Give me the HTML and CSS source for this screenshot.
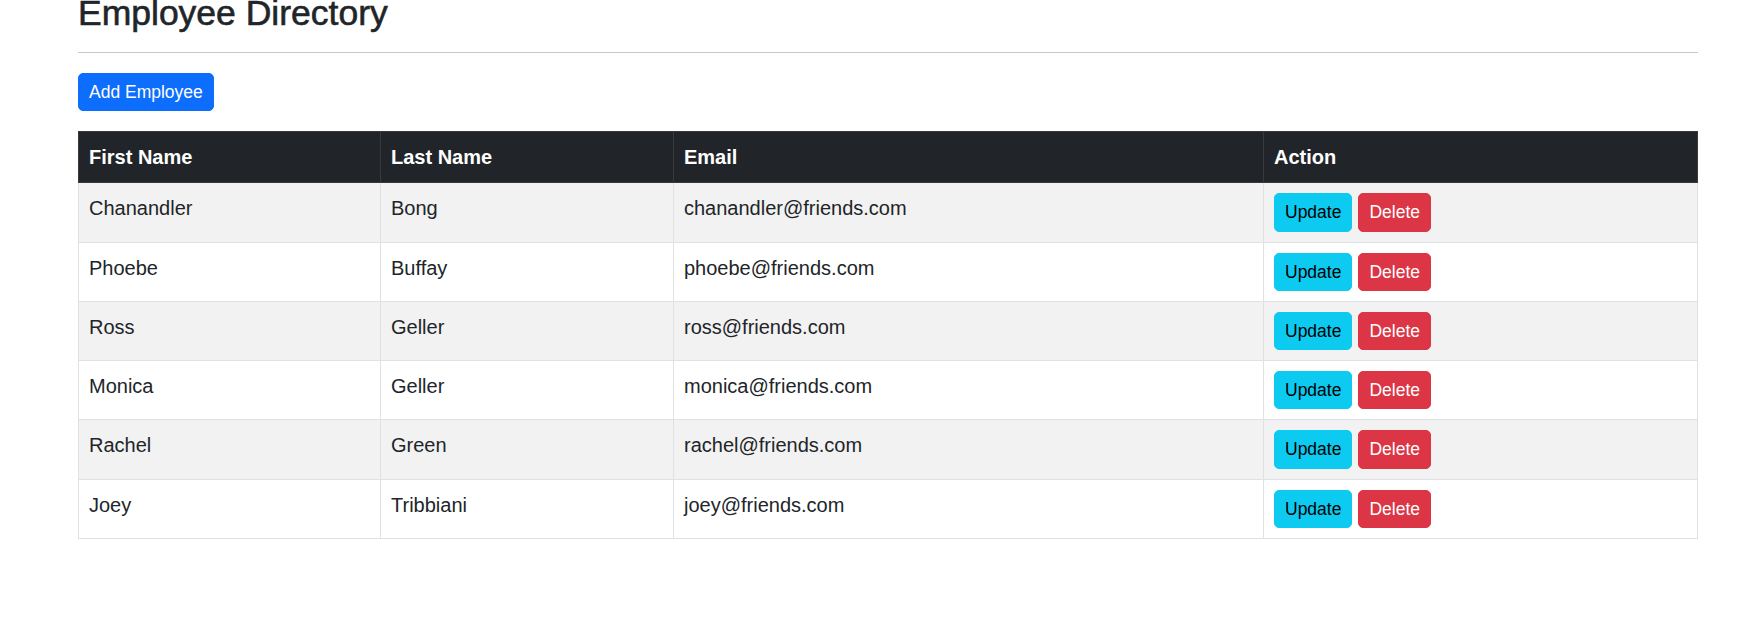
FILE: index.html
```html
<!DOCTYPE html>
<html lang="en">
<head>
<meta charset="utf-8">
<title>Employee Directory</title>
<link rel="stylesheet" href="styles.css">
</head>
<body>
<div class="page">
  <h1 class="title">Employee Directory</h1>
  <hr class="rule">
  <button class="btn btn-primary add-btn">Add Employee</button>
  <table class="table">
    <thead>
      <tr>
        <th class="col-first">First Name</th>
        <th class="col-last">Last Name</th>
        <th class="col-email">Email</th>
        <th class="col-action">Action</th>
      </tr>
    </thead>
    <tbody>
      <tr>
        <td>Chanandler</td><td>Bong</td><td>chanandler@friends.com</td>
        <td><div class="actions"><button class="btn btn-info">Update</button><button class="btn btn-danger">Delete</button></div></td>
      </tr>
      <tr>
        <td>Phoebe</td><td>Buffay</td><td>phoebe@friends.com</td>
        <td><div class="actions"><button class="btn btn-info">Update</button><button class="btn btn-danger">Delete</button></div></td>
      </tr>
      <tr>
        <td>Ross</td><td>Geller</td><td>ross@friends.com</td>
        <td><div class="actions"><button class="btn btn-info">Update</button><button class="btn btn-danger">Delete</button></div></td>
      </tr>
      <tr>
        <td>Monica</td><td>Geller</td><td>monica@friends.com</td>
        <td><div class="actions"><button class="btn btn-info">Update</button><button class="btn btn-danger">Delete</button></div></td>
      </tr>
      <tr>
        <td>Rachel</td><td>Green</td><td>rachel@friends.com</td>
        <td><div class="actions"><button class="btn btn-info">Update</button><button class="btn btn-danger">Delete</button></div></td>
      </tr>
      <tr>
        <td>Joey</td><td>Tribbiani</td><td>joey@friends.com</td>
        <td><div class="actions"><button class="btn btn-info">Update</button><button class="btn btn-danger">Delete</button></div></td>
      </tr>
    </tbody>
  </table>
</div>
</body>
</html>
```

FILE: styles.css
```css
html, body {
  margin: 0;
  padding: 0;
  background: #ffffff;
}

body {
  font-family: "Segoe UI", "Liberation Sans", Arial, sans-serif;
  font-size: 20px;
  line-height: 1.5;
  color: #212529;
  overflow: hidden;
}

.page {
  padding: 0 64px 0 78px;
  display: flex;
  flex-direction: column;
  align-items: flex-start;
}

.title {
  margin: -8px 0 18px 0;
  font-size: 35.5px;
  line-height: 42px;
  font-weight: 500;
  color: #212529;
  -webkit-text-stroke: 0.6px #212529;
}

.rule {
  align-self: stretch;
  margin: 0 0 20px 0;
  border: 0;
  border-top: 1px solid #c8c9ca;
  height: 0;
}

.btn {
  display: inline-block;
  font-family: inherit;
  font-size: 17.5px;
  line-height: 1.5;
  padding: 5px 10px;
  border: 1px solid transparent;
  border-radius: 5px;
  cursor: pointer;
}

.btn-primary {
  background: #0d6efd;
  border-color: #0d6efd;
  color: #ffffff;
}

.btn-info {
  background: #0dcaf0;
  border-color: #0dcaf0;
  color: #000000;
}

.btn-danger {
  background: #dc3545;
  border-color: #dc3545;
  color: #ffffff;
}

.add-btn {
  margin-bottom: 20px;
}

.table {
  align-self: stretch;
  border-collapse: collapse;
  table-layout: fixed;
  width: 100%;
  border: 1px solid #dee2e6;
}

.table th,
.table td {
  box-sizing: border-box;
  padding: 10px;
  text-align: left;
  vertical-align: top;
  border: 1px solid #dee2e6;
}

.table thead th {
  background: #212529;
  color: #ffffff;
  font-weight: 700;
  border-color: #373b3e;
  vertical-align: bottom;
}

.col-first { width: 302px; }
.col-last { width: 293px; }
.col-email { width: 590px; }
.col-action { width: auto; }

.table tbody tr:nth-child(odd) td {
  background: #f2f2f2;
}

.table tbody tr:nth-child(even) td {
  background: #ffffff;
}

.actions {
  display: flex;
  gap: 6px;
}
```
